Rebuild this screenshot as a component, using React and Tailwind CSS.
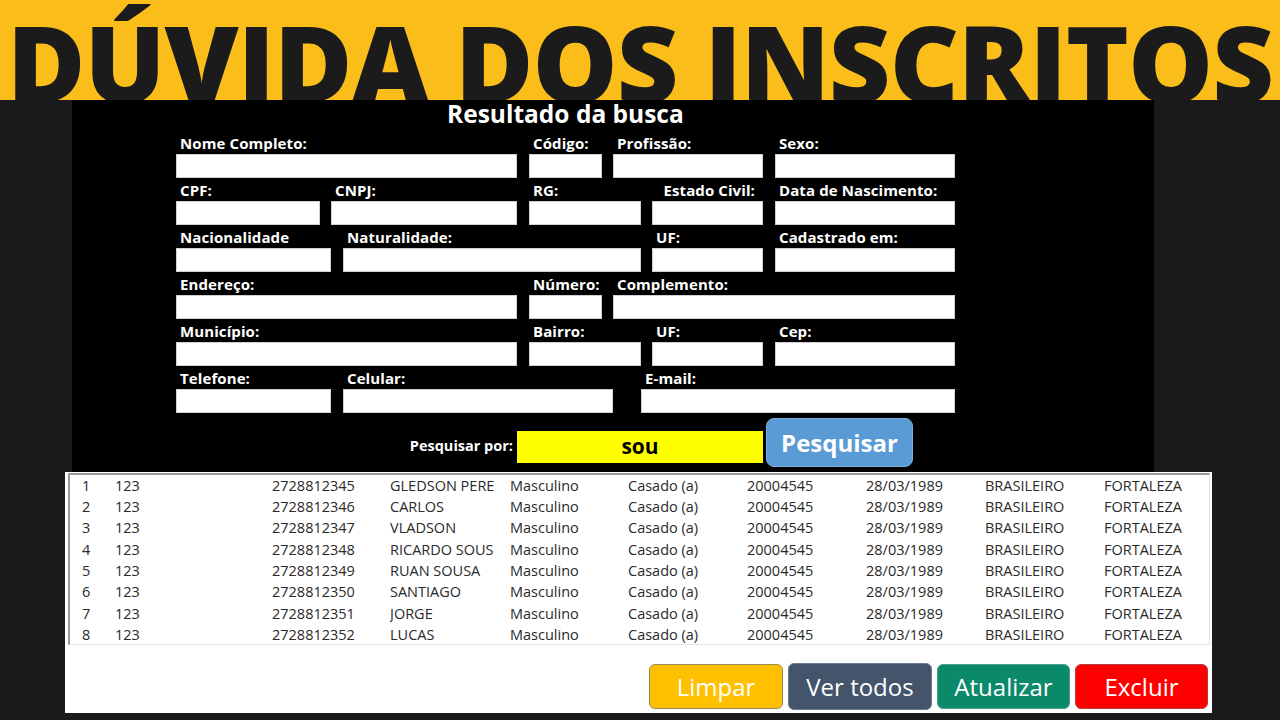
import React from "react";

// Form rows: each field has a width class and the gap before it
const formRows = [
  [
    { label: "Nome Completo:", w: "w-[341px]", ml: "" },
    { label: "Código:", w: "w-[73px]", ml: "ml-[12px]" },
    { label: "Profissão:", w: "w-[150px]", ml: "ml-[11px]" },
    { label: "Sexo:", w: "w-[180px]", ml: "ml-[12px]" },
  ],
  [
    { label: "CPF:", w: "w-[144px]", ml: "" },
    { label: "CNPJ:", w: "w-[186px]", ml: "ml-[11px]" },
    { label: "RG:", w: "w-[112px]", ml: "ml-[12px]" },
    { label: "Estado Civil:", w: "w-[111px]", ml: "ml-[11px]", right: true },
    { label: "Data de Nascimento:", w: "w-[180px]", ml: "ml-[12px]" },
  ],
  [
    { label: "Nacionalidade", w: "w-[155px]", ml: "" },
    { label: "Naturalidade:", w: "w-[298px]", ml: "ml-[12px]" },
    { label: "UF:", w: "w-[111px]", ml: "ml-[11px]" },
    { label: "Cadastrado em:", w: "w-[180px]", ml: "ml-[12px]" },
  ],
  [
    { label: "Endereço:", w: "w-[341px]", ml: "" },
    { label: "Número:", w: "w-[73px]", ml: "ml-[12px]" },
    { label: "Complemento:", w: "w-[342px]", ml: "ml-[11px]" },
  ],
  [
    { label: "Município:", w: "w-[341px]", ml: "" },
    { label: "Bairro:", w: "w-[112px]", ml: "ml-[12px]" },
    { label: "UF:", w: "w-[111px]", ml: "ml-[11px]" },
    { label: "Cep:", w: "w-[180px]", ml: "ml-[12px]" },
  ],
  [
    { label: "Telefone:", w: "w-[155px]", ml: "" },
    { label: "Celular:", w: "w-[270px]", ml: "ml-[12px]" },
    { label: "E-mail:", w: "w-[314px]", ml: "ml-[28px]" },
  ],
];

const names = [
  "GLEDSON PERE",
  "CARLOS",
  "VLADSON",
  "RICARDO SOUS",
  "RUAN SOUSA",
  "SANTIAGO",
  "JORGE",
  "LUCAS",
];

const records = names.map((name, i) => ({
  n: i + 1,
  cod: "123",
  cpf: String(2728812345 + i),
  name,
}));

function Field({ label, w, ml, right }) {
  return (
    <div className={`flex flex-col ${w} ${ml}`}>
      <div
        className={`h-[21px] leading-[21px] text-[15px] font-bold text-white px-[4px] whitespace-nowrap tracking-[0.1px] ${
          right ? "text-right pr-[8px]" : ""
        }`}
      >
        {label}
      </div>
      <div className="h-[24px] bg-white border border-[#d0d0d0]" />
    </div>
  );
}

export default function App() {
  return (
    <div
      className="w-[1280px] h-[720px] bg-[#1a1a1c] overflow-hidden"
      style={{ fontFamily: '"Open Sans", "Noto Sans", sans-serif' }}
    >
      {/* Banner */}
      <div className="h-[100px] bg-[#fabd1a] flex justify-center items-end overflow-hidden">
        <h1 className="text-[107px] leading-[80px] font-extrabold text-[#1b1b1b] whitespace-nowrap tracking-[-1px] mb-[-2px]">
          DÚVIDA DOS INSCRITOS
        </h1>
      </div>

      {/* Search result panel */}
      <div className="ml-[72px] w-[1082px] h-[372px] bg-black flex flex-col">
        <div className="h-[33px] pl-[375px] text-[24.5px] leading-[28px] font-bold text-white">
          Resultado da busca
        </div>

        <div className="pl-[104px] flex flex-col gap-[2px]">
          {formRows.map((row, r) => (
            <div key={r} className="flex">
              {row.map((f, i) => (
                <Field key={i} {...f} />
              ))}
            </div>
          ))}
        </div>

        <div className="flex items-center mt-[5px]">
          <div className="w-[445px] flex justify-end pr-[4px] pt-[6px]">
            <span className="text-[14.5px] font-bold text-white">Pesquisar por:</span>
          </div>
          <div className="w-[246px] h-[32px] mt-[8px] bg-[#ffff00] flex items-center justify-center">
            <span className="text-[21px] font-bold text-black">sou</span>
          </div>
          <button className="ml-[3px] w-[147px] h-[49px] rounded-[8px] bg-[#5b9bd5] border border-[#7fb0dc] text-white text-[24px] font-bold">
            Pesquisar
          </button>
        </div>
      </div>

      {/* Records list */}
      <div className="ml-[65px] w-[1147px] h-[241px] bg-white flex flex-col">
        <div className="ml-[3px] mt-[1px] w-[1142px] h-[172px] border-l-2 border-t-2 border-[#9a9a9a] border-r border-b border-r-[#e4e4e4] border-b-[#e4e4e4]">
          {records.map((rec) => (
            <div
              key={rec.n}
              className="flex h-[21.3px] items-center text-[14.5px] text-[#2a2a2a] whitespace-nowrap"
            >
              <span className="w-[45px] pl-[12px]">{rec.n}</span>
              <span className="w-[157px]">{rec.cod}</span>
              <span className="w-[118px]">{rec.cpf}</span>
              <span className="w-[120px] overflow-hidden">{rec.name}</span>
              <span className="w-[118px]">Masculino</span>
              <span className="w-[119px]">Casado (a)</span>
              <span className="w-[119px]">20004545</span>
              <span className="w-[119px]">28/03/1989</span>
              <span className="w-[119px]">BRASILEIRO</span>
              <span className="flex-1">FORTALEZA</span>
            </div>
          ))}
        </div>

        <div className="flex justify-end items-center gap-[5px] pr-[4px] mt-[18px]">
          <button className="w-[134px] h-[45px] rounded-[6px] bg-[#ffc000] border border-[#9c8a55] text-white text-[24px]">
            Limpar
          </button>
          <button className="w-[144px] h-[47px] rounded-[6px] bg-[#44546a] border border-[#6a7a90] text-white text-[24px]">
            Ver todos
          </button>
          <button className="w-[133px] h-[45px] rounded-[6px] bg-[#0a8a6a] border border-[#4aa08a] text-white text-[24px]">
            Atualizar
          </button>
          <button className="w-[133px] h-[45px] rounded-[6px] bg-[#ff0000] border border-[#b04040] text-white text-[24px]">
            Excluir
          </button>
        </div>
      </div>
    </div>
  );
}
